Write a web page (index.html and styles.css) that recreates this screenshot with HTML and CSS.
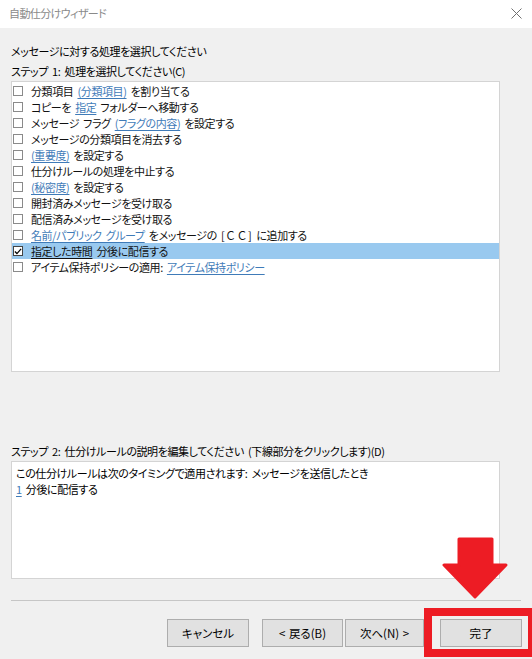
FILE: index.html
```html
<!DOCTYPE html>
<html lang="ja">
<head>
<meta charset="utf-8">
<title>自動仕分けウィザード</title>
<link rel="stylesheet" href="styles.css">
</head>
<body>
<div class="window">
  <div class="titlebar">
    <span class="title">自動仕分けウィザード</span>
    <svg class="close" width="11" height="11" viewBox="0 0 11 11"><path d="M0.5 0.5 L10.5 10.5 M10.5 0.5 L0.5 10.5" stroke="#707070" stroke-width="1" fill="none"/></svg>
  </div>
  <div class="content">
    <p class="label">メッセージに対する処理を選択してください</p>
    <p class="label">ステップ 1: 処理を選択してください(C)</p>
    <ul class="list">
      <li class="row"><span class="cb"></span><span class="txt">分類項目 <a class="lnk">(分類項目)</a> を割り当てる</span></li>
      <li class="row"><span class="cb"></span><span class="txt">コピーを <a class="lnk">指定</a> フォルダーへ移動する</span></li>
      <li class="row"><span class="cb"></span><span class="txt">メッセージ フラグ <a class="lnk">(フラグの内容)</a> を設定する</span></li>
      <li class="row"><span class="cb"></span><span class="txt">メッセージの分類項目を消去する</span></li>
      <li class="row"><span class="cb"></span><span class="txt"><a class="lnk">(重要度)</a> を設定する</span></li>
      <li class="row"><span class="cb"></span><span class="txt">仕分けルールの処理を中止する</span></li>
      <li class="row"><span class="cb"></span><span class="txt"><a class="lnk">(秘密度)</a> を設定する</span></li>
      <li class="row"><span class="cb"></span><span class="txt">開封済みメッセージを受け取る</span></li>
      <li class="row"><span class="cb"></span><span class="txt">配信済みメッセージを受け取る</span></li>
      <li class="row"><span class="cb"></span><span class="txt"><a class="lnk">名前/パブリック グループ</a> をメッセージの <span class="wide">[ＣＣ]</span> に追加する</span></li>
      <li class="row selected"><span class="cb checked"><svg width="9" height="9" viewBox="0 0 9 9"><path d="M1 4.5 L3.3 6.8 L8 1.5" stroke="#000" stroke-width="1.4" fill="none"/></svg></span><span class="txt"><a class="lnk sel">指定した時間</a> 分後に配信する</span></li>
      <li class="row"><span class="cb"></span><span class="txt">アイテム保持ポリシーの適用: <a class="lnk">アイテム保持ポリシー</a></span></li>
    </ul>
    <p class="label step2">ステップ 2: 仕分けルールの説明を編集してください (下線部分をクリックします)(D)</p>
    <div class="desc">
      <p class="dline">この仕分けルールは次のタイミングで適用されます: メッセージを送信したとき</p>
      <p class="dline"><a class="lnk">1</a> 分後に配信する</p>
    </div>
    <div class="sep"></div>
    <div class="buttons">
      <button class="btn w82">キャンセル</button>
      <button class="btn w81 gap-l">&lt; 戻る(B)</button>
      <button class="btn w79">次へ(N) &gt;</button>
      <button class="btn w82 gap-xl">完了</button>
    </div>
  </div>
  <div class="annot-box"></div>
  <svg class="annot-arrow" width="66" height="62" viewBox="0 0 66 62">
    <polygon points="17,2 50,2 50,28 64,28 33,60 2,28 17,28" fill="#ed1c24" stroke="#ed1c24" stroke-width="3" stroke-linejoin="round"/>
  </svg>
</div>
</body>
</html>
```

FILE: styles.css
```css
* { box-sizing: border-box; }
html, body { margin: 0; padding: 0; }
body {
  width: 532px;
  height: 659px;
  background: #f0f0f0;
  font-family: "Noto Sans CJK JP", "Noto Sans", sans-serif;
  font-size: 11px;
  letter-spacing: -0.4px;
  word-spacing: 2px;
  color: #000;
  font-feature-settings: "palt";
  overflow: hidden;
}
.window {
  position: relative;
  width: 532px;
  height: 659px;
}
.titlebar {
  height: 28px;
  background: #fff;
  display: flex;
  align-items: center;
  justify-content: space-between;
  padding: 0 10px 2px 9px;
}
.title {
  color: #8a8a8a;
  font-size: 11px;
  letter-spacing: -0.6px;
}
.close { display: block; }
.content {
  padding: 13px 0 0 11px;
}
.label {
  margin: 0;
  height: 20px;
  line-height: 20px;
  white-space: nowrap;
}
.list {
  list-style: none;
  margin: 0;
  padding: 1px 0 0 0;
  width: 489px;
  height: 291px;
  background: #fff;
  border: 1px solid #d4d4d4;
}
.row {
  height: 16px;
  line-height: 16px;
  display: flex;
  align-items: center;
  white-space: nowrap;
}
.row.selected { background: #99c9ef; }
.cb {
  width: 10px;
  height: 10px;
  margin-left: 1px;
  margin-right: 8px;
  border: 1px solid #8a8a8a;
  background: #fff;
  display: flex;
  align-items: center;
  justify-content: center;
  flex: none;
}
.cb.checked { border-color: #444; }
.cb svg { display: block; }
.txt { color: #111; }
.wide {
  font-feature-settings: normal;
  letter-spacing: 0.5px;
}
.lnk {
  color: #3f7bb8;
  text-decoration: underline;
  text-underline-offset: 2px;
}
.lnk.sel { color: #111; }
.step2 { margin-top: 69px; }
.desc {
  width: 489px;
  height: 118px;
  background: #fff;
  border: 1px solid #d4d4d4;
  padding: 3px 0 0 4px;
}
.dline {
  margin: 0;
  height: 16px;
  line-height: 16px;
  white-space: nowrap;
}
.sep {
  margin-top: 21px;
  margin-right: 11px;
  height: 1px;
  background: #c6c6c6;
}
.buttons {
  margin-top: 18px;
  display: flex;
  justify-content: flex-end;
  padding-right: 10px;
}
.btn {
  height: 28px;
  background: #e1e1e1;
  border: 1px solid #adadad;
  font-family: inherit;
  font-size: 11.5px;
  font-feature-settings: "palt";
  letter-spacing: 0;
  word-spacing: 1px;
  color: #000;
  padding: 0;
  margin: 0;
}
.w82 { width: 82px; }
.w81 { width: 81px; }
.w79 { width: 79px; margin-left: 2px; }
.gap-l { margin-left: 13px; }
.gap-xl { margin-left: 16px; }
.annot-box {
  position: absolute;
  left: 424px;
  top: 608px;
  width: 112px;
  height: 49px;
  border: 8px solid #ed1c24;
}
.annot-arrow {
  position: absolute;
  left: 442px;
  top: 537px;
}
```
